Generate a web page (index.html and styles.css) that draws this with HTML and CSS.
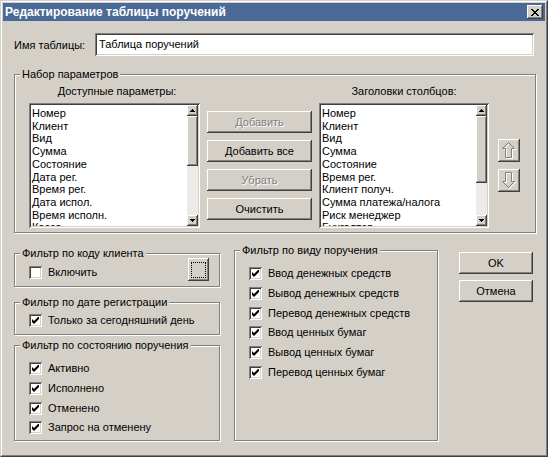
FILE: index.html
```html
<!DOCTYPE html>
<html lang="ru">
<head>
<meta charset="utf-8">
<title>Редактирование таблицы поручений</title>
<link rel="stylesheet" href="styles.css">
</head>
<body>
<div class="window">
  <div class="window-inner">
    <div class="titlebar">
      <span class="title">Редактирование таблицы поручений</span>
      <div class="close raised">
        <svg width="8" height="7" viewBox="0 0 8 7" shape-rendering="crispEdges" fill="#000">
          <rect x="0" y="0" width="2" height="1"/><rect x="6" y="0" width="2" height="1"/>
          <rect x="1" y="1" width="2" height="1"/><rect x="5" y="1" width="2" height="1"/>
          <rect x="2" y="2" width="4" height="1"/>
          <rect x="3" y="3" width="2" height="1"/>
          <rect x="2" y="4" width="4" height="1"/>
          <rect x="1" y="5" width="2" height="1"/><rect x="5" y="5" width="2" height="1"/>
          <rect x="0" y="6" width="2" height="1"/><rect x="6" y="6" width="2" height="1"/>
        </svg>
      </div>
    </div>

    <div class="content">
      <div class="name-row">
        <span class="name-label">Имя таблицы:</span>
        <div class="textbox sunken">Таблица поручений</div>
      </div>

      <div class="group params">
        <div class="legend">Набор параметров</div>
        <div class="params-inner">
          <div class="list-col left-list">
            <div class="caption caption-left">Доступные параметры:</div>
            <div class="listbox sunken">
              <div class="items">
                <div>Номер</div><div>Клиент</div><div>Вид</div><div>Сумма</div><div>Состояние</div>
                <div>Дата рег.</div><div>Время рег.</div><div>Дата испол.</div><div>Время исполн.</div><div>Касса</div>
              </div>
              <div class="scrollbar">
                <div class="sb-btn raised">
                  <svg width="5" height="3" viewBox="0 0 5 3" shape-rendering="crispEdges"><rect x="2" y="0" width="1" height="1"/><rect x="1" y="1" width="3" height="1"/><rect x="0" y="2" width="5" height="1"/></svg>
                </div>
                <div class="sb-thumb raised thumb-left"></div>
                <div class="sb-track"></div>
                <div class="sb-btn raised">
                  <svg width="5" height="3" viewBox="0 0 5 3" shape-rendering="crispEdges"><rect x="0" y="0" width="5" height="1"/><rect x="1" y="1" width="3" height="1"/><rect x="2" y="2" width="1" height="1"/></svg>
                </div>
              </div>
            </div>
          </div>

          <div class="btn-col">
            <div class="btn raised disabled">Добавить</div>
            <div class="btn raised">Добавить все</div>
            <div class="btn raised disabled">Убрать</div>
            <div class="btn raised">Очистить</div>
          </div>

          <div class="list-col right-list">
            <div class="caption">Заголовки столбцов:</div>
            <div class="listbox sunken">
              <div class="items">
                <div>Номер</div><div>Клиент</div><div>Вид</div><div>Сумма</div><div>Состояние</div>
                <div>Время рег.</div><div>Клиент получ.</div><div>Сумма платежа/налога</div><div>Риск менеджер</div><div>Бухгалтер</div>
              </div>
              <div class="scrollbar">
                <div class="sb-btn raised">
                  <svg width="5" height="3" viewBox="0 0 5 3" shape-rendering="crispEdges"><rect x="2" y="0" width="1" height="1"/><rect x="1" y="1" width="3" height="1"/><rect x="0" y="2" width="5" height="1"/></svg>
                </div>
                <div class="sb-thumb raised thumb-right"></div>
                <div class="sb-track"></div>
                <div class="sb-btn raised">
                  <svg width="5" height="3" viewBox="0 0 5 3" shape-rendering="crispEdges"><rect x="0" y="0" width="5" height="1"/><rect x="1" y="1" width="3" height="1"/><rect x="2" y="2" width="1" height="1"/></svg>
                </div>
              </div>
            </div>
          </div>

          <div class="move-col">
            <div class="move-btn raised">
              <svg width="14" height="17" viewBox="0 0 14 17" fill="none">
                <polygon points="7.5,1.5 13.5,7.5 10.5,7.5 10.5,16.5 4.5,16.5 4.5,7.5 1.5,7.5" stroke="#fff"/>
                <polygon points="6.5,0.5 12.5,6.5 9.5,6.5 9.5,15.5 3.5,15.5 3.5,6.5 0.5,6.5" stroke="#808080"/>
              </svg>
            </div>
            <div class="move-btn raised">
              <svg width="14" height="17" viewBox="0 0 14 17" fill="none">
                <polygon points="7.5,16.5 13.5,10.5 10.5,10.5 10.5,1.5 4.5,1.5 4.5,10.5 1.5,10.5" stroke="#fff"/>
                <polygon points="6.5,15.5 12.5,9.5 9.5,9.5 9.5,0.5 3.5,0.5 3.5,9.5 0.5,9.5" stroke="#808080"/>
              </svg>
            </div>
          </div>
        </div>
      </div>

      <div class="lower">
        <div class="left-col">
          <div class="group g-client">
            <div class="legend">Фильтр по коду клиента</div>
            <div class="client-row">
              <div class="check"><span class="cb sunken"></span><span>Включить</span></div>
              <div class="browse raised"><span class="dots"></span></div>
            </div>
          </div>
          <div class="group g-date">
            <div class="legend">Фильтр по дате регистрации</div>
            <div class="checks">
              <div class="check"><span class="cb sunken on"><svg width="7" height="7" viewBox="0 0 7 7"><polygon points="0,2 2,4 7,-1 7,2 2,7 0,5" fill="#000"/></svg></span><span>Только за сегодняшний день</span></div>
            </div>
          </div>
          <div class="group g-state">
            <div class="legend">Фильтр по состоянию поручения</div>
            <div class="checks">
              <div class="check"><span class="cb sunken"><svg width="7" height="7" viewBox="0 0 7 7"><polygon points="0,2 2,4 7,-1 7,2 2,7 0,5" fill="#000"/></svg></span><span>Активно</span></div>
              <div class="check"><span class="cb sunken"><svg width="7" height="7" viewBox="0 0 7 7"><polygon points="0,2 2,4 7,-1 7,2 2,7 0,5" fill="#000"/></svg></span><span>Исполнено</span></div>
              <div class="check"><span class="cb sunken"><svg width="7" height="7" viewBox="0 0 7 7"><polygon points="0,2 2,4 7,-1 7,2 2,7 0,5" fill="#000"/></svg></span><span>Отменено</span></div>
              <div class="check"><span class="cb sunken"><svg width="7" height="7" viewBox="0 0 7 7"><polygon points="0,2 2,4 7,-1 7,2 2,7 0,5" fill="#000"/></svg></span><span>Запрос на отменену</span></div>
            </div>
          </div>
        </div>

        <div class="group g-kind">
          <div class="legend">Фильтр по виду поручения</div>
          <div class="checks">
            <div class="check"><span class="cb sunken"><svg width="7" height="7" viewBox="0 0 7 7"><polygon points="0,2 2,4 7,-1 7,2 2,7 0,5" fill="#000"/></svg></span><span>Ввод денежных средств</span></div>
            <div class="check"><span class="cb sunken"><svg width="7" height="7" viewBox="0 0 7 7"><polygon points="0,2 2,4 7,-1 7,2 2,7 0,5" fill="#000"/></svg></span><span>Вывод денежных средств</span></div>
            <div class="check"><span class="cb sunken"><svg width="7" height="7" viewBox="0 0 7 7"><polygon points="0,2 2,4 7,-1 7,2 2,7 0,5" fill="#000"/></svg></span><span>Перевод денежных средств</span></div>
            <div class="check"><span class="cb sunken"><svg width="7" height="7" viewBox="0 0 7 7"><polygon points="0,2 2,4 7,-1 7,2 2,7 0,5" fill="#000"/></svg></span><span>Ввод ценных бумаг</span></div>
            <div class="check"><span class="cb sunken"><svg width="7" height="7" viewBox="0 0 7 7"><polygon points="0,2 2,4 7,-1 7,2 2,7 0,5" fill="#000"/></svg></span><span>Вывод ценных бумаг</span></div>
            <div class="check"><span class="cb sunken"><svg width="7" height="7" viewBox="0 0 7 7"><polygon points="0,2 2,4 7,-1 7,2 2,7 0,5" fill="#000"/></svg></span><span>Перевод ценных бумаг</span></div>
          </div>
        </div>

        <div class="dlg-buttons">
          <div class="btn raised">OK</div>
          <div class="btn raised">Отмена</div>
        </div>
      </div>
    </div>
  </div>
</div>
</body>
</html>
```

FILE: styles.css
```css
* { box-sizing: border-box; }

html, body {
  margin: 0;
  padding: 0;
}

body {
  width: 548px;
  height: 457px;
  overflow: hidden;
  background: #d4d0c8;
  font-family: "Liberation Sans", Arial, sans-serif;
  font-size: 11px;
  color: #000;
}

.window {
  width: 548px;
  height: 457px;
  background: #d4d0c8;
  border: 1px solid;
  border-color: #d4d0c8 #404040 #404040 #d4d0c8;
}

.window-inner {
  height: 100%;
  border: 1px solid;
  border-color: #ffffff #808080 #808080 #ffffff;
  padding: 1px;
}

.raised {
  background: #d4d0c8;
  box-shadow: inset -1px -1px #404040, inset 1px 1px #ffffff, inset -2px -2px #808080, inset 2px 2px #d4d0c8;
}

.sunken {
  background: #ffffff;
  box-shadow: inset 1px 1px #808080, inset -1px -1px #ffffff, inset 2px 2px #404040, inset -2px -2px #d4d0c8;
}

/* title bar */
.titlebar {
  height: 18px;
  background: #4a6996;
  display: flex;
  align-items: center;
  padding: 0 2px 0 2px;
}

.title {
  flex: 1;
  color: #ffffff;
  font-weight: bold;
  font-size: 12px;
  white-space: nowrap;
}

.close {
  width: 16px;
  height: 14px;
  display: flex;
  align-items: center;
  justify-content: center;
  padding-right: 1px;
}

.close svg { display: block; }

/* content */
.content {
  padding-left: 11px;
}

.name-row {
  margin-top: 12px;
  height: 23px;
  display: flex;
  align-items: center;
}

.name-label {
  width: 81px;
}

.textbox {
  width: 439px;
  height: 23px;
  line-height: 23px;
  padding-left: 4px;
}

/* group boxes */
.group {
  border: 1px solid #808080;
  box-shadow: inset 1px 1px #ffffff, 1px 1px 0 #ffffff;
}

.legend {
  display: block;
  width: max-content;
  height: 13px;
  line-height: 13px;
  margin: -7px 0 -6px 5px;
  padding: 0 2px;
  background: #d4d0c8;
  position: relative;
}

.params {
  margin-top: 18px;
  width: 522px;
  height: 159px;
}

.params-inner {
  display: flex;
  align-items: flex-start;
  padding: 10px 0 0 14px;
}

.list-col {
  display: flex;
  flex-direction: column;
}

.left-list { width: 171px; }
.right-list { width: 170px; margin-left: 7px; }

.caption {
  height: 13px;
  line-height: 13px;
  text-align: center;
  margin-bottom: 5px;
  white-space: nowrap;
}

.caption-left { padding-left: 5px; }

.listbox {
  height: 125px;
  padding: 2px;
  display: flex;
}

.items {
  flex: 1;
  overflow: hidden;
  padding: 2px 0 0 1px;
  line-height: 12.7px;
  white-space: nowrap;
}

.scrollbar {
  width: 11px;
  display: flex;
  flex-direction: column;
}

.sb-btn {
  height: 11px;
  display: flex;
  align-items: center;
  justify-content: center;
}

.sb-btn svg { display: block; }

.thumb-left { height: 50px; }
.thumb-right { height: 67px; }

.sb-track {
  flex: 1;
  background: #ecebe8;
}

.btn-col {
  width: 105px;
  margin-left: 7px;
  margin-top: 26px;
  display: flex;
  flex-direction: column;
  gap: 7px;
}

.btn {
  height: 22px;
  line-height: 22px;
  text-align: center;
  white-space: nowrap;
}

.btn.disabled {
  color: #808080;
  text-shadow: 1px 1px 0 #ffffff;
}

.move-col {
  width: 22px;
  margin-left: 9px;
  margin-top: 54px;
  display: flex;
  flex-direction: column;
  gap: 7px;
}

.move-btn {
  height: 23px;
  display: flex;
  align-items: center;
  justify-content: center;
}

.move-btn svg { display: block; }

/* lower area */
.lower {
  display: flex;
  align-items: flex-start;
}

.left-col {
  width: 206px;
  margin-top: 20px;
  display: flex;
  flex-direction: column;
}

.g-client { height: 34px; }
.g-date { height: 33px; margin-top: 15px; }
.g-state { height: 96px; margin-top: 10px; }

.g-kind {
  width: 204px;
  height: 191px;
  margin-left: 14px;
  margin-top: 17px;
}

.client-row {
  display: flex;
  align-items: flex-start;
  padding: 4px 10px 0 14px;
}

.client-row .check { margin-top: 8px; }

.browse {
  margin-left: auto;
  width: 21px;
  height: 23px;
  display: flex;
  align-items: center;
  justify-content: center;
}

.dots {
  width: 15px;
  height: 16px;
  border: 1px dotted #000;
}

.checks {
  display: flex;
  flex-direction: column;
  gap: 6.8px;
  padding-left: 14px;
}

.g-date .checks { padding-top: 11px; }
.g-state .checks { padding-top: 16px; }
.g-kind .checks { padding-top: 16px; }

.check {
  height: 13px;
  display: flex;
  align-items: center;
  white-space: nowrap;
  line-height: 13px;
}

.cb {
  width: 13px;
  height: 13px;
  margin-right: 6px;
  flex: none;
  display: flex;
  align-items: center;
  justify-content: center;
}

.cb svg { display: block; }

.dlg-buttons {
  width: 74px;
  margin-left: 21px;
  margin-top: 19px;
  display: flex;
  flex-direction: column;
  gap: 6px;
}
```
